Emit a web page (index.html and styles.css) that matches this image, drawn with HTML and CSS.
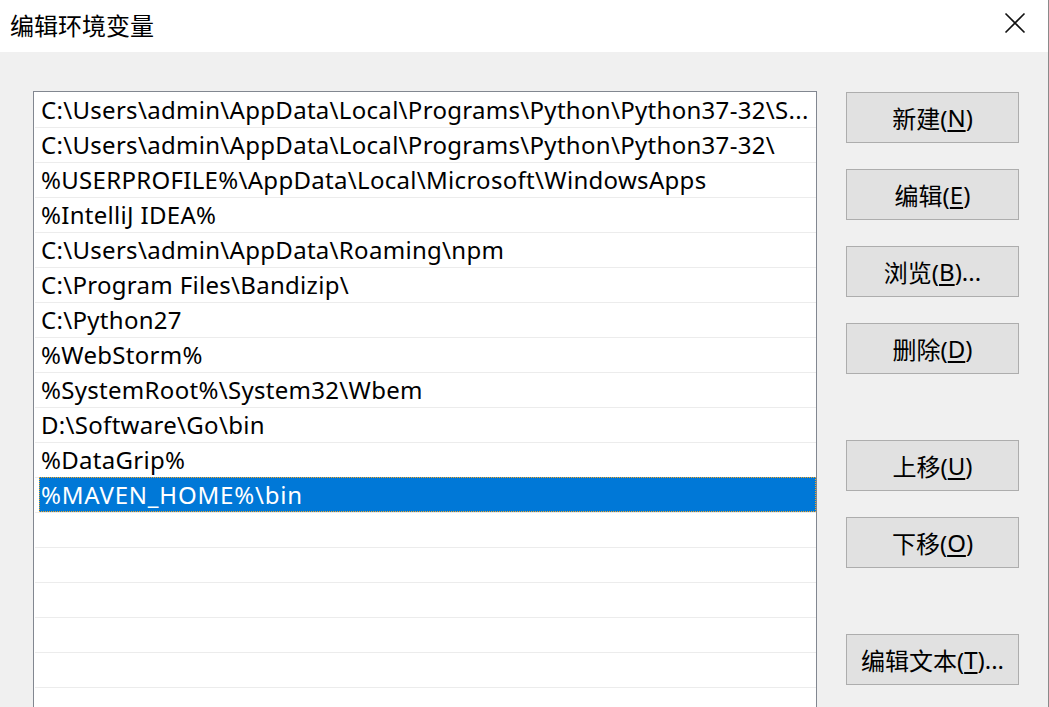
FILE: index.html
```html
<!DOCTYPE html>
<html lang="zh-CN">
<head>
<meta charset="utf-8">
<title>编辑环境变量</title>
<link rel="stylesheet" href="styles.css">
</head>
<body>
<div class="window">
  <div class="titlebar">
    <span class="title">编辑环境变量</span>
    <span class="close" aria-label="关闭">
      <svg width="22" height="22" viewBox="0 0 22 22"><path d="M1.5 1.5 L20.5 20.5 M20.5 1.5 L1.5 20.5" stroke="#111" stroke-width="1.6" fill="none"/></svg>
    </span>
  </div>
  <div class="content">
    <div class="list">
      <div class="row"><span class="cell">C:\Users\admin\AppData\Local\Programs\Python\Python37-32\S...</span></div>
      <div class="row"><span class="cell">C:\Users\admin\AppData\Local\Programs\Python\Python37-32\</span></div>
      <div class="row"><span class="cell">%USERPROFILE%\AppData\Local\Microsoft\WindowsApps</span></div>
      <div class="row"><span class="cell">%IntelliJ IDEA%</span></div>
      <div class="row"><span class="cell">C:\Users\admin\AppData\Roaming\npm</span></div>
      <div class="row"><span class="cell">C:\Program Files\Bandizip\</span></div>
      <div class="row"><span class="cell">C:\Python27</span></div>
      <div class="row"><span class="cell">%WebStorm%</span></div>
      <div class="row"><span class="cell">%SystemRoot%\System32\Wbem</span></div>
      <div class="row"><span class="cell">D:\Software\Go\bin</span></div>
      <div class="row"><span class="cell">%DataGrip%</span></div>
      <div class="row selected"><span class="cell">%MAVEN_HOME%\bin</span></div>
      <div class="row"><span class="cell"></span></div>
      <div class="row"><span class="cell"></span></div>
      <div class="row"><span class="cell"></span></div>
      <div class="row"><span class="cell"></span></div>
      <div class="row"><span class="cell"></span></div>
    </div>
    <div class="buttons">
      <div class="btn">新建(<u>N</u>)</div>
      <div class="btn">编辑(<u>E</u>)</div>
      <div class="btn">浏览(<u>B</u>)...</div>
      <div class="btn">删除(<u>D</u>)</div>
      <div class="btn sep">上移(<u>U</u>)</div>
      <div class="btn">下移(<u>O</u>)</div>
      <div class="btn sep">编辑文本(<u>T</u>)...</div>
    </div>
  </div>
</div>
</body>
</html>
```
FILE: styles.css
```css
html, body {
  margin: 0;
  padding: 0;
  height: 100%;
  overflow: hidden;
}
body {
  font-family: "Noto Sans", "Noto Sans CJK SC", sans-serif;
  color: #000;
  background: #f0f0f0;
}
.window {
  width: 1049px;
  height: 707px;
  box-sizing: border-box;
  border-right: 1px solid #8a8a8a;
  background: #f0f0f0;
}
.titlebar {
  height: 52px;
  background: #fff;
  display: flex;
  align-items: center;
  justify-content: space-between;
}
.title {
  font-family: "Noto Sans CJK SC", sans-serif;
  font-size: 24px;
  margin-left: 10px;
  margin-top: -4px;
}
.close {
  width: 22px;
  height: 22px;
  margin-right: 22px;
  margin-top: -6px;
  display: flex;
}
.content {
  display: flex;
  align-items: flex-start;
  padding-top: 39px;
}
.list {
  margin-left: 33px;
  width: 784px;
  height: 640px;
  box-sizing: border-box;
  border: 1px solid #828790;
  padding-top: 1px;
  background: #fff;
  overflow: hidden;
}
.row {
  height: 35px;
  box-sizing: border-box;
  border-bottom: 1px solid #ececec;
  margin-left: 1px;
  display: flex;
}
.cell {
  flex: 1;
  margin-left: 4px;
  padding-left: 2px;
  font-size: 24px;
  letter-spacing: 0.3px;
  line-height: 34px;
  white-space: nowrap;
  overflow: hidden;
}
.row.selected {
  margin-top: -1px;
  height: 36px;
}
.row.selected .cell {
  background: #0078d7;
  color: #fff;
  line-height: 36px;
  letter-spacing: 0.8px;
  outline: 1px dotted #f5a623;
  outline-offset: -1px;
}
.buttons {
  margin-left: 29px;
  padding-top: 1px;
  display: flex;
  flex-direction: column;
}
.btn {
  width: 173px;
  height: 51px;
  box-sizing: border-box;
  border: 1px solid #adadad;
  background: #e1e1e1;
  display: flex;
  align-items: center;
  justify-content: center;
  font-family: "Noto Sans", "Noto Sans CJK SC", sans-serif;
  font-size: 24px;
}
.btn + .btn {
  margin-top: 26px;
}
.btn + .btn.sep {
  margin-top: 66px;
}
.btn u {
  text-underline-offset: 3px;
}
```
